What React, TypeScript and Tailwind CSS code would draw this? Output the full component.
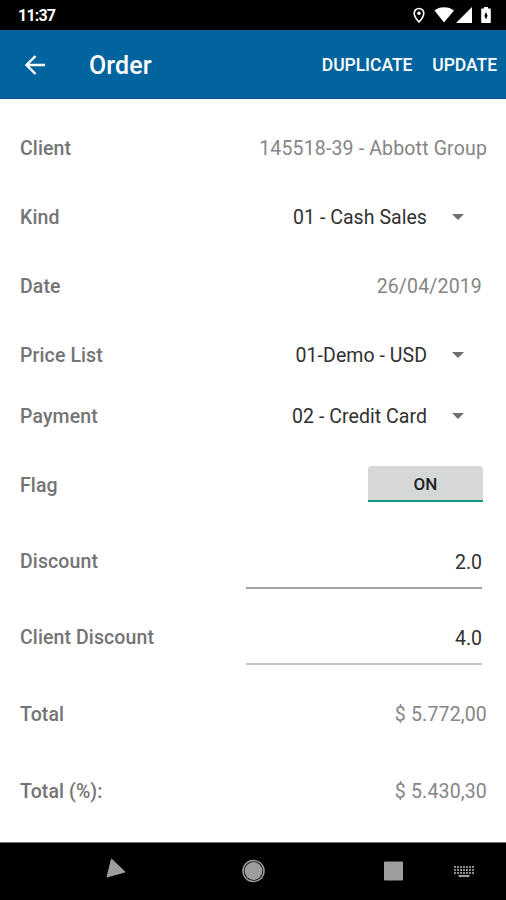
import React from "react";

type RowProps = {
  label: string;
  className: string;
  children: React.ReactNode;
};

const Row: React.FC<RowProps> = ({ label, className, children }) => (
  <div className={`flex items-center justify-between pl-5 ${className}`}>
    <span className="font-medium tracking-[0.1px] text-[#747474]">{label}</span>
    {children}
  </div>
);

const ReadOnlyValue: React.FC<{ value: string }> = ({ value }) => (
  <span className="pr-[19px] tracking-[0.16px] text-[#858585]">{value}</span>
);

const Select: React.FC<{ value: string }> = ({ value }) => (
  <button type="button" className="flex items-center gap-[25px] pr-[42px] tracking-[0.05px] text-[#303030]">
    {value}
    <svg className="mb-0.5" width="12" height="6" viewBox="0 0 12 6" fill="#707070">
      <path d="M0 0h12L6 6z" />
    </svg>
  </button>
);

const NumberField: React.FC<{ value: string; className: string }> = ({ value, className }) => (
  <input
    className={`mr-6 h-[54px] w-[236px] bg-transparent pt-0.5 text-right text-[#303030] outline-none ${className}`}
    defaultValue={value}
  />
);

const StatusBar = () => (
  <div className="flex h-[30px] items-center justify-between bg-black pl-[18px] pr-[15px] text-white">
    <span className="pt-0.5 text-base font-bold tracking-[-0.8px]">11:37</span>
    <svg width="80" height="20" viewBox="0 0 80 20" fill="white">
      <path
        d="M8 3.5a4.800 4.800 0 0 0-4.800 4.800C3.200 12 8 17 8 17s4.800-5 4.800-8.700A4.800 4.800 0 0 0 8 3.500z"
        fill="none"
        stroke="white"
        strokeWidth="1.6"
      />
      <circle cx="8" cy="8.3" r="1.7" />
      <path d="M23.500 5.500C28 1 38 1 43 5.500L33 17.500z" />
      <path d="M61 2v16H45z" />
      <path
        d="M71 3.500h2V2h4v1.500h2q.8 0 .8.800v13q0 .8-.8.800h-8q-.8 0-.8-.8v-13q0-.8.800-.8zM75 7l-1.600 3.700L75 14.500l1.600-3.800z"
        fillRule="evenodd"
      />
    </svg>
  </div>
);

const AppBar = () => (
  <header className="flex h-[69px] items-center border-b border-[#0b5594] bg-[#01649f] pl-[25px] pr-[9px] text-white">
    <svg className="mt-px" width="20" height="20" viewBox="0 0 20 20" fill="none" stroke="white" strokeWidth="2.4">
      <path d="M20 10H2M10.500 1L1.500 10l9 9" />
    </svg>
    <h1 className="ml-11 pt-[3px] text-[25px] font-medium tracking-[0.1px]">Order</h1>
    <div className="ml-auto flex gap-5 pt-0.5 text-[17.5px] font-medium tracking-[-0.05px]">
      <button type="button">DUPLICATE</button>
      <button type="button">UPDATE</button>
    </div>
  </header>
);

const NavBar = () => (
  <nav className="h-[58px] border-t border-[#777] bg-black">
    <svg width="506" height="57" viewBox="0 0 506 57" fill="#9d9d9d" stroke="#9d9d9d" strokeLinejoin="round">
      <path d="M111.500 16l13.500 13-18 5z" />
      <circle cx="253.500" cy="28" r="9" stroke="none" />
      <circle cx="253.500" cy="28" r="10.500" fill="none" strokeWidth="1.5" />
      <rect x="384.500" y="19" width="18" height="18" />
      <path d="M454 24h20M454 27h20M454 30h20" stroke="#8c8c8c" strokeWidth="2" strokeDasharray="2 1" />
      <path d="M458.500 33h11" strokeWidth="2" />
    </svg>
  </nav>
);

export default function App() {
  return (
    <div className="flex h-[900px] w-[506px] flex-col bg-white font-['Roboto',sans-serif] text-[19.5px]">
      <StatusBar />
      <AppBar />
      <main className="flex-1 pt-[15px]">
        <Row label="Client" className="h-[69px]">
          <ReadOnlyValue value="145518-39 - Abbott Group" />
        </Row>
        <Row label="Kind" className="h-[69px]">
          <Select value="01 - Cash Sales" />
        </Row>
        <Row label="Date" className="h-[69px] pr-[5px]">
          <ReadOnlyValue value="26/04/2019" />
        </Row>
        <Row label="Price List" className="h-[69px]">
          <Select value="01-Demo - USD" />
        </Row>
        <Row label="Payment" className="h-[54px]">
          <Select value="02 - Credit Card" />
        </Row>
        <Row label="Flag" className="h-[84px]">
          <button
            type="button"
            className="mr-[23px] mb-1 h-9 w-[115px] rounded-t-sm border-b-2 border-[#159588] bg-[#d6d7d7] pt-1 text-[17px] font-medium text-[#222]"
          >
            ON
          </button>
        </Row>
        <Row label="Discount" className="h-[68px]">
          <NumberField value="2.0" className="border-b-2 border-[#a0a0a0]" />
        </Row>
        <Row label="Client Discount" className="h-[84px]">
          <NumberField value="4.0" className="border-b-2 border-[#c4c4c4]" />
        </Row>
        <Row label="Total" className="h-[70px]">
          <ReadOnlyValue value="$ 5.772,00" />
        </Row>
        <Row label="Total (%):" className="h-[83px]">
          <ReadOnlyValue value="$ 5.430,30" />
        </Row>
      </main>
      <NavBar />
    </div>
  );
}
